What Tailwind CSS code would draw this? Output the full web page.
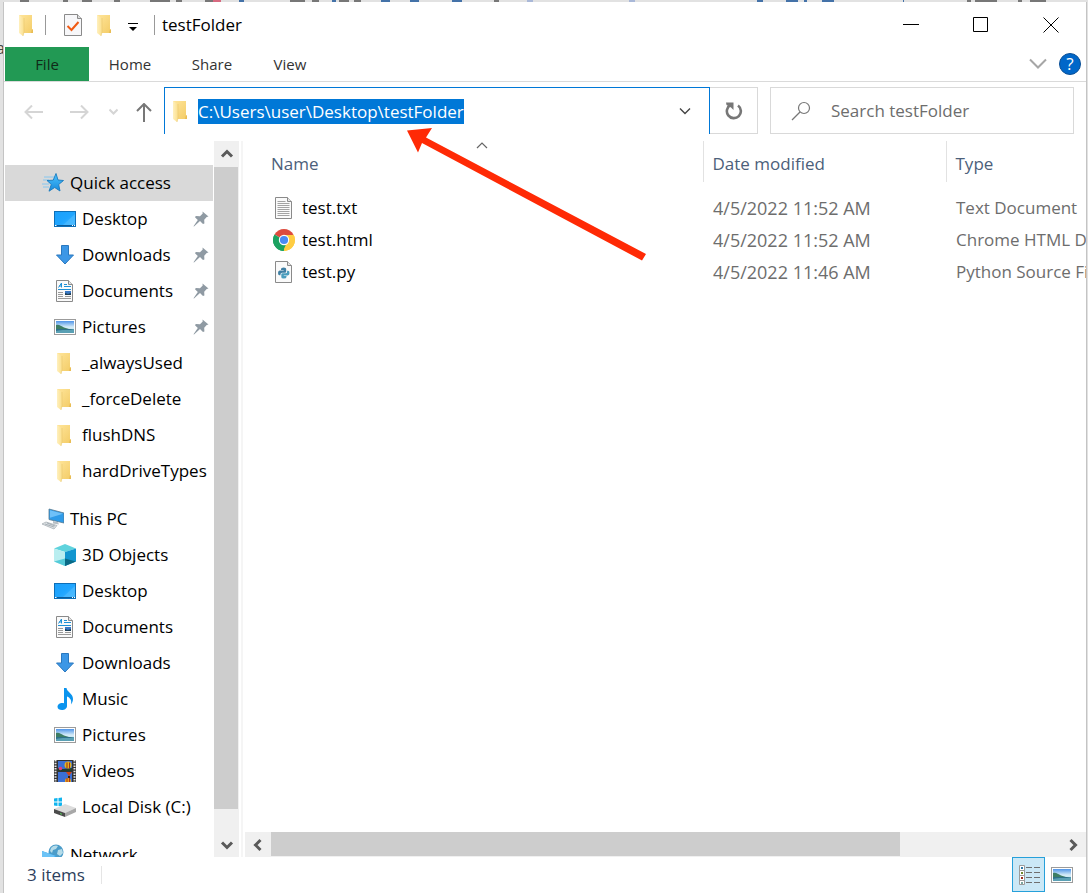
<!DOCTYPE html>
<html lang="en">
  <head>
    <meta charset="UTF-8" />
    <meta name="viewport" content="width=device-width, initial-scale=1.0" />
    <title>testFolder</title>
    <script src="https://cdn.jsdelivr.net/npm/@tailwindcss/browser@4"></script>
  </head>
  <body
    class="relative flex h-screen flex-col overflow-hidden bg-[#e2e2e2] font-['Open_Sans','Noto_Sans',sans-serif] text-[17px] text-black"
  >
    <!-- icons -->
    <svg class="absolute size-0" aria-hidden="true">
      <defs>
        <linearGradient id="gFolder" x1="0" y1="0" x2="1" y2="1">
          <stop offset="0" stop-color="#ffe59a" />
          <stop offset="1" stop-color="#f3cc67" />
        </linearGradient>
        <linearGradient id="gFlap" x1="0" y1="0" x2="1" y2="0">
          <stop offset="0" stop-color="#fff0be" />
          <stop offset="1" stop-color="#fbdf8c" />
        </linearGradient>
        <linearGradient id="gSky" x1="0" y1="0" x2="0" y2="1">
          <stop offset="0" stop-color="#4f94e8" />
          <stop offset="0.5" stop-color="#d5ecf8" />
          <stop offset="1" stop-color="#b8dcec" />
        </linearGradient>
        <linearGradient id="gBlue" x1="0" y1="0" x2="1" y2="1">
          <stop offset="0" stop-color="#1ca0fa" />
          <stop offset="0.5" stop-color="#1fa5ff" />
          <stop offset="1" stop-color="#48b8ff" />
        </linearGradient>
        <linearGradient id="gStar" x1="0" y1="0" x2="0" y2="1">
          <stop offset="0" stop-color="#4cc4ff" />
          <stop offset="1" stop-color="#1889dc" />
        </linearGradient>
      </defs>
      <symbol id="folder" viewBox="0 0 22 22">
        <path d="M3 1h13v14l1 1v3H5z" fill="url(#gFolder)" />
        <path d="M16 15l1 1v3h-2z" fill="#e9bd55" />
        <path d="M3 1l5 3v14l-1 4-4-3z" fill="url(#gFlap)" />
        <path d="M8 4v14l-1 4" fill="none" stroke="#e8c770" stroke-width=".6" />
      </symbol>
      <symbol id="star" viewBox="0 0 22 22">
        <path d="M2 5h10M1 8h6M0 12h7M1 15h6" stroke="#86c6ee" stroke-width="1" />
        <path
          d="M14 1.500l2 6.500 5.500.5-4.800 4 1.300 6.500-5.300-3.500-5.700 3.700 2.300-6.700-4.300-4 6.200-.3z"
          fill="url(#gStar)" stroke="#1779bd" stroke-width=".9"
        />
      </symbol>
      <symbol id="desktop" viewBox="0 0 22 22">
        <rect x=".5" y="3.500" width="21" height="15" fill="url(#gBlue)" stroke="#0d6fb8" />
        <path d="M9 17L21 6v11z" fill="#5cc2ff" opacity=".5" />
        <path d="M1 17.500h20" stroke="#0a5c9c" />
        <path d="M1 17.500h1.500M18 17.500h1M20 17.500h1" stroke="#fff" />
      </symbol>
      <symbol id="download" viewBox="0 0 22 22">
        <path d="M7.500 1.500h7v9.500h5l-8.500 9-8.500-9h5z" fill="#3c97e6" stroke="#2a78bf" />
      </symbol>
      <symbol id="document" viewBox="0 0 22 22">
        <path d="M2.500.5h12l4 4v17h-16z" fill="#fafafa" stroke="#8a8a8a" />
        <path d="M14.500.5v4h4" fill="#e4e4e4" stroke="#8a8a8a" />
        <path d="M4.500 7.500l3-4.500v4.500M5 6h3M10 4.500h3M10 6.500h7M4 9.500h13" fill="none" stroke="#1e90d6" />
        <path d="M4 12.500h5M4 14.500h5M4 16.500h5M4 18.500h13M11 16.500h6" stroke="#9a9a9a" />
        <rect x="11" y="11" width="6" height="4" fill="#3a78c4" />
        <path d="M11 15v-2l3 1 3-1v2z" fill="#1f3f56" />
      </symbol>
      <symbol id="picture" viewBox="0 0 22 22">
        <rect x=".5" y="3.500" width="21" height="15" fill="#fff" stroke="#9b9b9b" />
        <rect x="2" y="5" width="18" height="12" fill="url(#gSky)" />
        <path d="M2 9c3-1 5 1 8 2.500l5 1.500H2z" fill="#3d7d64" />
        <path d="M2 13h18v4H2z" fill="#2e7089" />
        <path d="M2 15c6-2 12 0 18-2v4H2z" fill="#5aa0b4" />
      </symbol>
      <symbol id="pc" viewBox="0 0 22 22">
        <path d="M7 1l15 4v10L7 11.500z" fill="#2f9be8" stroke="#56788f" stroke-width=".8" />
        <path d="M8 2.200l13 3.500-13 4z" fill="#6fc1f8" />
        <path d="M11 13l5 1.200 1 2.300-6-1z" fill="#b6bec4" />
        <path d="M0 16l4-2 11 3.500-3 3.500z" fill="#dfe3e6" stroke="#9fa8ad" stroke-width=".7" />
        <path d="M3 16l9 3M5 15l8 3" stroke="#929ca3" stroke-width=".7" />
      </symbol>
      <symbol id="cube" viewBox="0 0 22 22">
        <path d="M0 4.500L11 0l11 4.500L11 8z" fill="#5fd3dd" />
        <path d="M0 4.500L11 8v14L0 17.500z" fill="#b9eef0" />
        <path d="M0 17.500l11-3V22z" fill="#55cbd9" />
        <path d="M22 4.500L11 8v14l11-4.500z" fill="#1296cf" />
        <path d="M11 14.500l11 3L11 22z" fill="#0a6a86" />
      </symbol>
      <symbol id="music" viewBox="0 0 22 22">
        <path
          d="M10 0h2.500c.5 4 6.500 5.500 6.500 11 0 2-.8 4-2 5.500.8-4-.5-6.500-4-8V18c0 2.500-2.500 4-5 4s-4.500-1.200-4.500-3.300S6 15 8 15c.8 0 1.500.1 2 .3z"
          fill="#0b94ee"
        />
      </symbol>
      <symbol id="video" viewBox="0 0 22 22">
        <path d="M0 0h22v22H0z" fill="#333" />
        <path d="M1.500 0v22M20.500 0v22" stroke="#e8e8e8" stroke-width="2" stroke-dasharray="1.500 1.200" />
        <path d="M4 1h14v10H4zM4 12h14v10H4z" fill="#3b6fd6" />
        <path d="M4 8l5 1 9-1v3H4z" fill="#203f30" />
        <circle cx="14" cy="5" r="3.500" fill="#e5b31c" />
        <path d="M12.500 2.500h1v6h-1zM15 2.500h1v6h-1z" fill="#952f20" />
        <circle cx="6.500" cy="8.500" r="1.800" fill="#de3d7d" />
        <path d="M12 12h6l-3 4z" fill="#d14718" />
        <path d="M14 16h2v2h-2z" fill="#3b2310" />
        <circle cx="14" cy="21" r="3" fill="#e5a41c" />
        <path d="M12.500 18h1v4h-1zM15 18h1v4h-1z" fill="#b13120" />
      </symbol>
      <symbol id="disk" viewBox="0 0 22 22">
        <path d="M0 2.500l3.500-.5v3.500H0zM4.500 2L8 1.500v4H4.500zM0 6.500h3.500V10L0 9.500zM4.500 6.500H8v4L4.500 10z" fill="#10b4ee" />
        <path d="M0 13L11 8l11 4-11 5z" fill="#dcdcdc" />
        <path d="M0 13l11 4v4L0 17z" fill="#4b4b4b" />
        <path d="M11 17l11-5v4l-11 5z" fill="#a8a8a8" />
        <path d="M6 17l2 .8v1L6 18z" fill="#56d05a" />
      </symbol>
      <symbol id="network" viewBox="0 0 22 22">
        <circle cx="14" cy="8" r="7.500" fill="#4b9cc9" />
        <path d="M9 4c2-3 6-3 7-2l-2 3-3 1-1 3-2-2zM16 6l4-1 1 4-3 3-3-2z" fill="#b5dbe8" />
        <path d="M0 7l14 5v10H0z" fill="#2c9de4" />
        <path d="M0 7l14 5-14 6z" fill="#6cc3f6" />
      </symbol>
      <symbol id="pin" viewBox="0 0 16 16">
        <path d="M9.500.5l6 5-1.800.6-2.500 2.700.2 3.700-1.400.5-3-3L1 15.500l-.5-.3 4.300-6.300-2.800-2.600.8-1.300 4.200.2 2.700-2.700z" fill="#8f9aa3" />
      </symbol>
      <symbol id="text-file" viewBox="0 0 22 22">
        <path d="M2.500.5h12l4 4v17h-16z" fill="#fafafa" stroke="#8a8a8a" />
        <path d="M14.500.5v4h4" fill="#e4e4e4" stroke="#8a8a8a" />
        <path d="M4.500 4.500h8M4.500 6.500h12M4.500 8.500h12M4.500 10.500h12M4.500 12.500h12M4.500 14.500h12M4.500 16.500h12M4.500 18.500h12" stroke="#a3a3a3" />
      </symbol>
      <symbol id="chrome" viewBox="0 0 22 22">
        <path d="M11 11L1.500 5.500A11 11 0 0 1 20.500 5.500z" fill="#dd4b3e" />
        <path d="M11 11L20.500 5.500A11 11 0 0 1 11 22z" fill="#ffcd42" />
        <path d="M11 11L11 22A11 11 0 0 1 1.500 5.500z" fill="#1ba261" />
        <path d="M11 6h9.800A11 11 0 0 1 11 22l4.500-8.500z" fill="#ffcd42" />
        <path d="M1.500 5.500L6.500 13.500l6.500 2L10 22A11 11 0 0 1 1.500 5.500z" fill="#1ba261" />
        <circle cx="11" cy="11" r="5.200" fill="#fff" />
        <circle cx="11" cy="11" r="4.100" fill="#4a8af4" />
      </symbol>
      <symbol id="python" viewBox="0 0 22 22">
        <path d="M2.500.5h12l4 4v17h-16z" fill="#fafafa" stroke="#8a8a8a" />
        <path d="M14.500.5v4h4" fill="#e4e4e4" stroke="#8a8a8a" />
        <path
          d="M8 9V8q0-1.500 2.700-1.500T13.200 8v2.500q0 1.300-1.300 1.300H9q-1.500 0-1.500 1.500v1H6.500Q5 14.300 5 12t1.700-2.500h4V9z"
          fill="#3f7fa3"
        />
        <path
          d="M13.500 15v1q0 1.500-2.700 1.500T8.300 16v-2.500q0-1.300 1.300-1.300h3q1.500 0 1.500-1.500v-1h.9q1.500 0 1.500 2.300t-1.700 2.500h-4v.5z"
          fill="#4b9dbd"
        />
      </symbol>
      <symbol id="chevron" viewBox="0 0 14 14">
        <path d="M2 4.500l5 5 5-5" fill="none" stroke="currentColor" stroke-width="3" />
      </symbol>
    </svg>

    <!-- edge of the document behind the window -->
    <svg class="h-[2px] w-full shrink-0" aria-hidden="true">
      <path d="M20 1h9M63 1h5M82 1h10M114 1h6M150 1h20M176 1h6M205 1h8M290 1h15M312 1h7M339 1h10M354 1h7M494 1h5M967 1h4M975 1h22M1018 1h4M1030 1h16" stroke="#777" stroke-width="2" />
      <path d="M239 1h5M332 1h4M381 1h9M410 1h9M452 1h10M757 1h6M786 1h12M804 1h3M822 1h12M903 1h1" stroke="#4472a8" stroke-width="2" />
      <path d="M527 1h6M629 1h6" stroke="#a9b8d8" stroke-width="2" />
      <path d="M213 1h8" stroke="#d86a80" stroke-width="2" />
    </svg>
    <span class="absolute top-9 -left-1 text-[16px] text-[#444]" aria-hidden="true">a</span>

    <main class="relative mr-px ml-[3px] flex min-h-0 flex-1 flex-col border-x border-[#c4c4c4] bg-white">
      <!-- title bar -->
      <header class="flex h-[45px] shrink-0 items-center pl-3">
        <svg class="size-[22px]"><use href="#folder" /></svg>
        <span class="ml-[7px] h-5 w-px bg-[#999]"></span>
        <button type="button" class="ml-[18px]" aria-label="Properties">
          <svg class="h-[22px] w-[18px]" viewBox="0 0 18 22">
            <path d="M.5.5h13l4 4v17H.5z" fill="#f7f7f9" stroke="#8a8a8a" />
            <path d="M13.500.5v4h4" fill="#ddd" stroke="#8a8a8a" />
            <path d="M3.500 12l4 4 7-8" fill="none" stroke="#f05a14" stroke-width="2" />
          </svg>
        </button>
        <button type="button" class="ml-3" aria-label="New folder">
          <svg class="size-[22px]"><use href="#folder" /></svg>
        </button>
        <button type="button" class="ml-3" aria-label="Customize Quick Access Toolbar">
          <svg class="h-4 w-[10px]" viewBox="0 0 10 16">
            <path d="M0 6.500h10" stroke="#000" />
            <path d="M1 10h8l-4 4z" />
          </svg>
        </button>
        <span class="ml-4 h-5 w-px bg-[#999]"></span>
        <h1 class="ml-[7px]">testFolder</h1>
        <div class="ml-auto flex items-center gap-[54px] pr-[27px]">
          <button type="button" aria-label="Minimize">
            <svg class="size-4" viewBox="0 0 16 16"><path d="M0 7.500h16" stroke="#000" /></svg>
          </button>
          <button type="button" aria-label="Maximize">
            <svg class="size-4" viewBox="0 0 16 16"><path d="M.5.5h14v14H.5z" fill="none" stroke="#000" /></svg>
          </button>
          <button type="button" aria-label="Close">
            <svg class="size-4" viewBox="0 0 16 16"><path d="M.5.5l15 15M15.500.5l-15 15" stroke="#000" /></svg>
          </button>
        </div>
      </header>

      <!-- ribbon tabs -->
      <nav class="flex h-[35px] shrink-0 items-stretch border-b border-[#dadada] pl-px text-[15px] text-[#333]">
        <button type="button" class="w-[84px] bg-[#229954] text-[#102a18]">File</button>
        <button type="button" class="w-[82px]">Home</button>
        <button type="button" class="w-[82px]">Share</button>
        <button type="button" class="w-[74px]">View</button>
        <div class="ml-auto flex items-center gap-3 pr-[5px]">
          <button type="button" aria-label="Minimize the Ribbon">
            <svg class="h-3 w-[18px]" viewBox="0 0 18 12">
              <path d="M1 1.500l8 8 8-8" fill="none" stroke="#a6a6a6" stroke-width="2" />
            </svg>
          </button>
          <button
            type="button"
            class="size-[22px] rounded-full border border-[#0a4f96] bg-[#0067c9] text-[17px] leading-5 text-white"
          >
            ?
          </button>
        </div>
      </nav>

      <!-- address bar -->
      <div class="flex h-[59px] shrink-0 items-start pt-[5px] pr-3">
        <div class="flex h-[47px] w-40 items-center pt-1 pl-5 text-[#d5d5d5]">
          <button type="button" aria-label="Back">
            <svg class="h-4 w-[19px]" viewBox="0 0 19 16">
              <path d="M19 7H1.500M8 .5L1.500 7 8 13.500" fill="none" stroke="currentColor" stroke-width="2" />
            </svg>
          </button>
          <button type="button" class="ml-[27px]" aria-label="Forward">
            <svg class="h-4 w-[19px]" viewBox="0 0 19 16">
              <path d="M0 7h17.500M11 .5L17.500 7 11 13.500" fill="none" stroke="currentColor" stroke-width="2" />
            </svg>
          </button>
          <button type="button" class="ml-5" aria-label="Recent locations">
            <svg class="h-3 w-[9px]" viewBox="0 0 9 12">
              <path d="M.5 2.500l4 4 4-4" fill="none" stroke="currentColor" stroke-width="2" />
            </svg>
          </button>
          <button type="button" class="ml-[18px] text-[#777]" aria-label="Up">
            <svg class="h-5 w-4" viewBox="0 0 16 20">
              <path d="M8 19V1M1 8l7-7 7 7" fill="none" stroke="currentColor" stroke-width="2" />
            </svg>
          </button>
        </div>
        <div class="flex h-[47px] min-w-0 flex-1 items-center border-x border-t border-[#0078d7] pr-4 pl-[5px]">
          <svg class="size-[22px] shrink-0"><use href="#folder" /></svg>
          <input
            id="address"
            type="text"
            aria-label="Address"
            value="C:\Users\user\Desktop\testFolder"
            spellcheck="false"
            class="ml-[6px] min-w-0 flex-1 leading-[25px] outline-none selection:bg-[#0078d7] selection:text-white"
          />
          <button type="button" aria-label="Previous locations">
            <svg class="h-3 w-4" viewBox="0 0 16 12">
              <path d="M3 3.500l5 5 5-5" fill="none" stroke="#444" stroke-width="1.400" />
            </svg>
          </button>
        </div>
        <button
          type="button"
          class="flex h-[47px] w-12 items-center justify-center border border-l-0 border-[#d9d9d9]"
          aria-label="Refresh"
        >
          <svg class="size-[18px]" viewBox="0 0 18 18">
            <path d="M13 3.500A7 7 0 1 1 5.500 3" fill="none" stroke="#777" stroke-width="2.600" />
            <path d="M1 .5h7.500V8L6 5.500 1.500 3z" fill="#777" />
          </svg>
        </button>
        <div class="ml-3 flex h-[47px] w-[304px] items-center border border-[#d9d9d9] pl-5">
          <svg class="size-5" viewBox="0 0 20 20">
            <circle cx="13" cy="7" r="5.500" fill="none" stroke="#777" stroke-width="1.200" />
            <path d="M9 11l-8 8" stroke="#777" stroke-width="1.200" />
          </svg>
          <input
            type="text"
            aria-label="Search"
            placeholder="Search testFolder"
            class="ml-5 min-w-0 flex-1 outline-none placeholder:text-[#6d6d6d]"
          />
        </div>
      </div>

      <div class="flex min-h-0 flex-1">
        <!-- navigation pane -->
        <nav class="w-[209px] shrink-0 overflow-hidden pt-6 pl-px">
          <a href="#" class="flex h-9 items-center gap-1.5 bg-[#d9d9d9] pl-[37px]">
            <svg class="size-[22px] shrink-0"><use href="#star" /></svg>Quick access
          </a>
          <ul class="mb-3">
            <li>
              <a href="#" class="flex h-9 items-center gap-1.5 pr-1 pl-[49px]">
                <svg class="size-[22px] shrink-0"><use href="#desktop" /></svg>Desktop
                <svg class="ml-auto size-4"><use href="#pin" /></svg>
              </a>
            </li>
            <li>
              <a href="#" class="flex h-9 items-center gap-1.5 pr-1 pl-[49px]">
                <svg class="size-[22px] shrink-0"><use href="#download" /></svg>Downloads
                <svg class="ml-auto size-4"><use href="#pin" /></svg>
              </a>
            </li>
            <li>
              <a href="#" class="flex h-9 items-center gap-1.5 pr-1 pl-[49px]">
                <svg class="size-[22px] shrink-0"><use href="#document" /></svg>Documents
                <svg class="ml-auto size-4"><use href="#pin" /></svg>
              </a>
            </li>
            <li>
              <a href="#" class="flex h-9 items-center gap-1.5 pr-1 pl-[49px]">
                <svg class="size-[22px] shrink-0"><use href="#picture" /></svg>Pictures
                <svg class="ml-auto size-4"><use href="#pin" /></svg>
              </a>
            </li>
            <li>
              <a href="#" class="flex h-9 items-center gap-1.5 pl-[49px]">
                <svg class="size-[22px] shrink-0"><use href="#folder" /></svg>_alwaysUsed
              </a>
            </li>
            <li>
              <a href="#" class="flex h-9 items-center gap-1.5 pl-[49px]">
                <svg class="size-[22px] shrink-0"><use href="#folder" /></svg>_forceDelete
              </a>
            </li>
            <li>
              <a href="#" class="flex h-9 items-center gap-1.5 pl-[49px]">
                <svg class="size-[22px] shrink-0"><use href="#folder" /></svg>flushDNS
              </a>
            </li>
            <li>
              <a href="#" class="flex h-9 items-center gap-1.5 pl-[49px]">
                <svg class="size-[22px] shrink-0"><use href="#folder" /></svg>hardDriveTypes
              </a>
            </li>
          </ul>
          <a href="#" class="flex h-9 items-center gap-1.5 pl-[37px]">
            <svg class="size-[22px] shrink-0"><use href="#pc" /></svg>This PC
          </a>
          <ul class="mb-3">
            <li>
              <a href="#" class="flex h-9 items-center gap-1.5 pl-[49px]">
                <svg class="size-[22px] shrink-0"><use href="#cube" /></svg>3D Objects
              </a>
            </li>
            <li>
              <a href="#" class="flex h-9 items-center gap-1.5 pl-[49px]">
                <svg class="size-[22px] shrink-0"><use href="#desktop" /></svg>Desktop
              </a>
            </li>
            <li>
              <a href="#" class="flex h-9 items-center gap-1.5 pl-[49px]">
                <svg class="size-[22px] shrink-0"><use href="#document" /></svg>Documents
              </a>
            </li>
            <li>
              <a href="#" class="flex h-9 items-center gap-1.5 pl-[49px]">
                <svg class="size-[22px] shrink-0"><use href="#download" /></svg>Downloads
              </a>
            </li>
            <li>
              <a href="#" class="flex h-9 items-center gap-1.5 pl-[49px]">
                <svg class="size-[22px] shrink-0"><use href="#music" /></svg>Music
              </a>
            </li>
            <li>
              <a href="#" class="flex h-9 items-center gap-1.5 pl-[49px]">
                <svg class="size-[22px] shrink-0"><use href="#picture" /></svg>Pictures
              </a>
            </li>
            <li>
              <a href="#" class="flex h-9 items-center gap-1.5 pl-[49px]">
                <svg class="size-[22px] shrink-0"><use href="#video" /></svg>Videos
              </a>
            </li>
            <li>
              <a href="#" class="flex h-9 items-center gap-1.5 pl-[49px]">
                <svg class="size-[22px] shrink-0"><use href="#disk" /></svg>Local Disk (C:)
              </a>
            </li>
          </ul>
          <a href="#" class="flex h-9 items-center gap-1.5 pl-[37px]">
            <svg class="size-[22px] shrink-0"><use href="#network" /></svg>Network
          </a>
        </nav>

        <!-- navigation pane scrollbar -->
        <div class="ml-px flex w-[25px] shrink-0 flex-col bg-[#f0f0f0] text-[#5a5a5a]">
          <button type="button" class="flex h-[26px] items-center justify-center" aria-label="Scroll up">
            <svg class="size-[14px] rotate-180"><use href="#chevron" /></svg>
          </button>
          <div class="mr-px flex-[642] bg-[#cdcdcd]"></div>
          <div class="flex-[24]"></div>
          <button type="button" class="flex h-6 items-center justify-center" aria-label="Scroll down">
            <svg class="size-[14px]"><use href="#chevron" /></svg>
          </button>
        </div>
        <div class="mr-[2px] ml-[2px] w-[2px] shrink-0 bg-[#f5f5f5]"></div>

        <!-- file list -->
        <section class="flex min-w-0 flex-1 flex-col">
          <div class="min-h-0 flex-1 overflow-hidden">
            <table class="w-full table-fixed text-left whitespace-nowrap">
              <thead>
                <tr class="h-[41px] text-[#4c607a]">
                  <th class="relative w-[458px] pt-1 pl-[26px] font-normal">
                    Name
                    <svg class="absolute top-0 left-1/2 h-2 w-4" viewBox="0 0 16 8">
                      <path d="M3 7l5-5 5 5" fill="none" stroke="#666" stroke-width="1.200" />
                    </svg>
                  </th>
                  <th class="w-[243px] border-l border-[#e2e2e2] pt-1 pl-[9px] font-normal">Date modified</th>
                  <th class="border-l border-[#e2e2e2] pt-1 pl-[9px] font-normal">Type</th>
                </tr>
              </thead>
              <tbody class="text-[#6d6d6d] before:block before:h-[10px]">
                <tr class="h-8">
                  <td class="pl-[28px] text-black">
                    <div class="flex items-center gap-[7px]">
                      <svg class="size-[22px]"><use href="#text-file" /></svg>test.txt
                    </div>
                  </td>
                  <td class="pl-[10px] text-[18px]">4/5/2022 11:52 AM</td>
                  <td class="overflow-hidden pl-[10px]">Text Document</td>
                </tr>
                <tr class="h-8">
                  <td class="pl-[28px] text-black">
                    <div class="flex items-center gap-[7px]">
                      <svg class="size-[22px]"><use href="#chrome" /></svg>test.html
                    </div>
                  </td>
                  <td class="pl-[10px] text-[18px]">4/5/2022 11:52 AM</td>
                  <td class="overflow-hidden pl-[10px]">Chrome HTML Document</td>
                </tr>
                <tr class="h-8">
                  <td class="pl-[28px] text-black">
                    <div class="flex items-center gap-[7px]">
                      <svg class="size-[22px]"><use href="#python" /></svg>test.py
                    </div>
                  </td>
                  <td class="pl-[10px] text-[18px]">4/5/2022 11:46 AM</td>
                  <td class="overflow-hidden pl-[10px]">Python Source File</td>
                </tr>
              </tbody>
            </table>
          </div>
          <div class="flex h-[25px] shrink-0 bg-[#f0f0f0] text-[#5a5a5a]">
            <button type="button" class="flex w-[26px] items-center justify-center" aria-label="Scroll left">
              <svg class="size-[14px] rotate-90"><use href="#chevron" /></svg>
            </button>
            <div class="mb-px flex-[629] bg-[#cdcdcd]"></div>
            <div class="flex-[160]"></div>
            <button type="button" class="flex w-[26px] items-center justify-center" aria-label="Scroll right">
              <svg class="size-[14px] -rotate-90"><use href="#chevron" /></svg>
            </button>
          </div>
        </section>
      </div>

      <!-- status bar -->
      <footer class="flex h-9 shrink-0 items-start pl-[23px] text-[#2c3e5c]">
        <span class="leading-9">3 items</span>
        <span class="mt-[9px] ml-4 h-[18px] w-px bg-[#e5e5e5]"></span>
        <div class="ml-auto flex items-center gap-1.5 pr-[13px]">
          <button
            type="button"
            class="flex h-[35px] w-[33px] items-center justify-center border border-[#26a0da] bg-[#cbe8f6]"
            aria-label="Details view"
          >
            <svg class="size-[22px]" viewBox="0 0 22 22">
              <path d="M1.500 1.500h5v19h-5zM1.500 6.500h5M1.500 11.500h5M1.500 16.500h5" fill="#fff" stroke="#9b9b9b" />
              <path d="M3 3h2v2H3z" fill="#2d79a8" />
              <path d="M3 8h2v2H3z" fill="#6f8a2c" />
              <path d="M3 13h2v2H3z" fill="#a02c1c" />
              <path d="M3 18h2v2H3z" fill="#7aa7a0" />
              <path d="M8 3.500h6M16 3.500h6M8 8.500h6M16 8.500h6M8 13.500h6M16 13.500h6M8 18.500h6M16 18.500h6" stroke="#6f6f6f" />
            </svg>
          </button>
          <button type="button" aria-label="Large icons view">
            <svg class="size-[22px]"><use href="#picture" /></svg>
          </button>
        </div>
      </footer>
    </main>

    <!-- arrow pointing at the address -->
    <svg class="pointer-events-none absolute top-[128px] left-[406px] h-[134px] w-[242px]" viewBox="0 0 242 134">
      <path d="M1 2.500L26 0l-6 9.500L240 126l-4 6.500L16 15l-4 9.500z" fill="#ff2a05" />
    </svg>

    <script>
      const address = document.getElementById("address");
      address.focus();
      address.select();
    </script>
  </body>
</html>
